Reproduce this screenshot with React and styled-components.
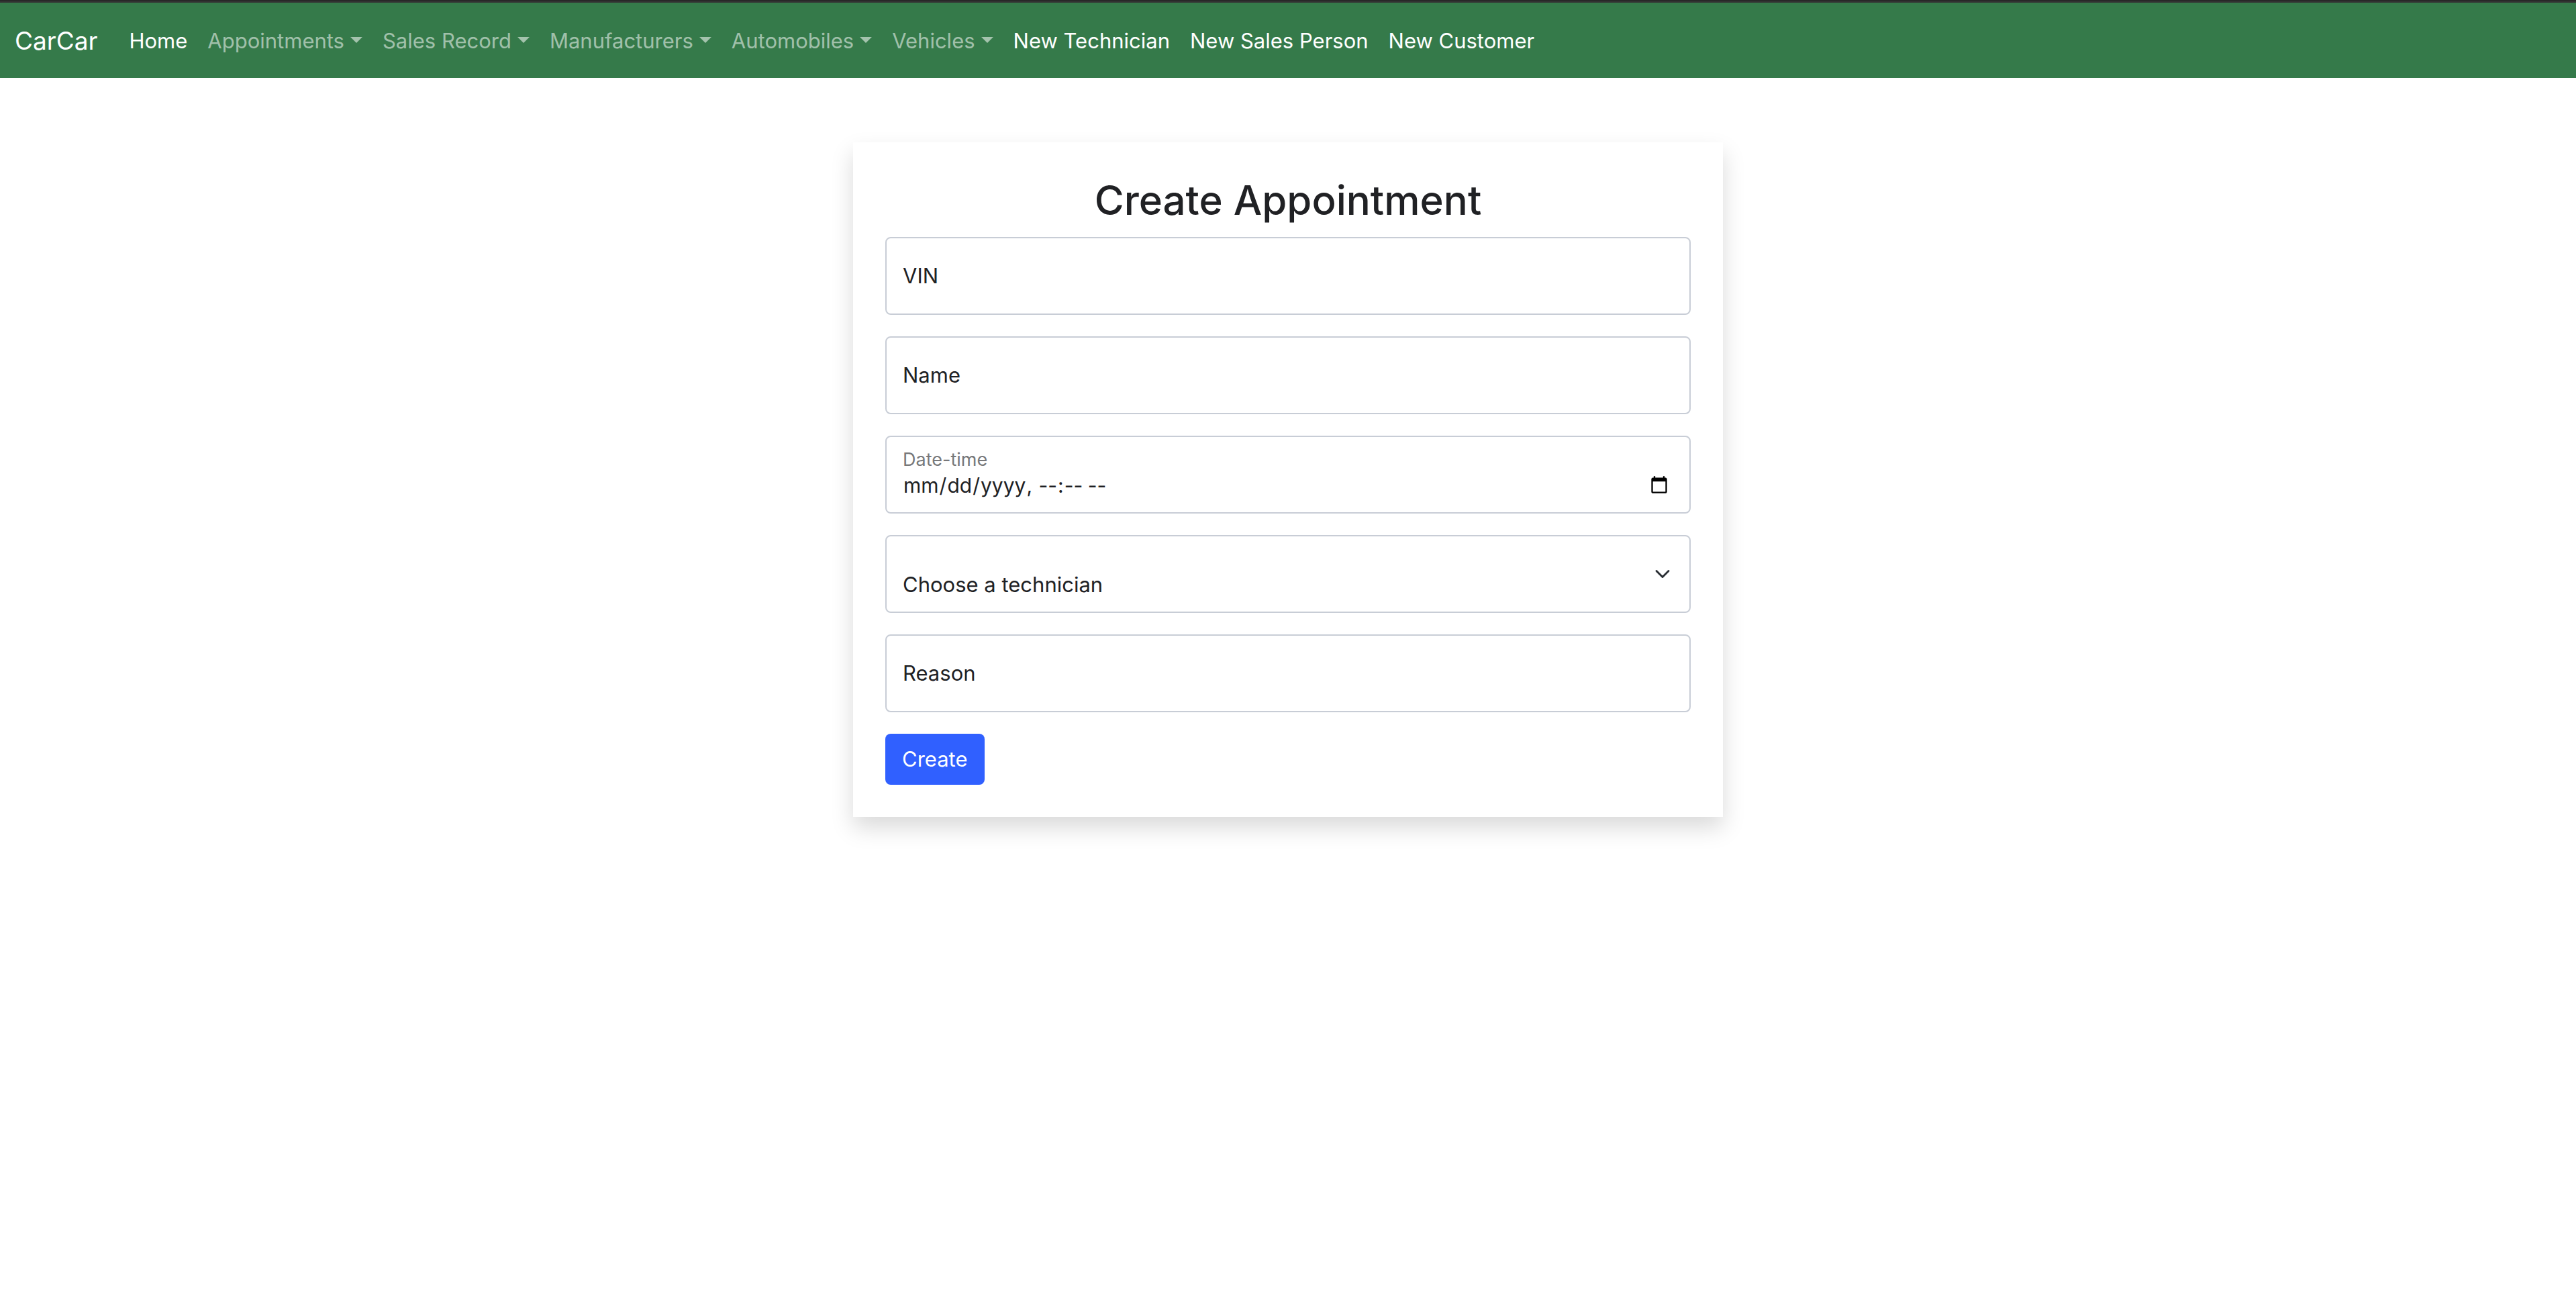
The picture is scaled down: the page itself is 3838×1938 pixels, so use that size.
import React from "react";
import styled, { createGlobalStyle, css } from "styled-components";

const GlobalStyle = createGlobalStyle`
  *, *::before, *::after { box-sizing: border-box; }
  body {
    margin: 0;
    background: #fff;
    color: #202124;
    font-family: Inter, "Liberation Sans", sans-serif;
    font-size: 31px;
    line-height: 48px;
  }
`;

const Navbar = styled.nav`
  display: flex;
  align-items: center;
  height: 116px;
  padding: 4px 22px 0;
  border-top: 2px solid #282828;
  box-shadow: inset 0 2px #343434;
  background: #357a4a;
`;

const Brand = styled.a`
  margin-right: 32px;
  color: #fff;
  font-size: 37px;
  text-decoration: none;
`;

const NavList = styled.ul`
  display: flex;
  margin: 0;
  padding: 0;
  list-style: none;
`;

const NavLink = styled.a`
  display: flex;
  align-items: center;
  padding: 16px 15px;
  color: ${(p) => (p.$menu ? "rgba(255, 255, 255, 0.55)" : "#fff")};
  text-decoration: none;
  ${(p) =>
    p.$menu &&
    css`
      &::after {
        content: "";
        margin: 0 0 4px 9px;
        border-top: 9px solid;
        border-left: 9px solid transparent;
        border-right: 9px solid transparent;
      }
    `}
`;

const Page = styled.main`
  display: flex;
  justify-content: center;
  padding: 96px 24px;
`;

const Card = styled.section`
  width: 100%;
  max-width: 1296px;
  padding: 48px;
  background: #fff;
  box-shadow: 0 16px 32px rgba(0, 0, 0, 0.15);
`;

const Title = styled.h1`
  margin: 0 0 16px;
  font-size: 60px;
  font-weight: 500;
  line-height: 77px;
  text-align: center;
`;

const Form = styled.form`
  display: flex;
  flex-direction: column;
  align-items: flex-start;
  gap: 32px;
`;

const Field = styled.div`
  display: grid;
  width: 100%;

  > * {
    grid-area: 1 / 1;
  }
`;

const control = css`
  width: 100%;
  height: 116px;
  margin: 0;
  padding: 52px 24px 20px;
  border: 2px solid #c8cdd6;
  border-radius: 8px;
  background: #fff;
  color: inherit;
  font: inherit;
  line-height: 40px;
  appearance: none;
`;

const Input = styled.input`
  ${control}

  &[type="datetime-local"] {
    padding-right: 28px;
    font-size: 30px;
  }

  &::-webkit-datetime-edit,
  &::-webkit-datetime-edit-fields-wrapper {
    padding: 0;
  }
`;

const Select = styled.select`
  ${control}
`;

const Label = styled.label`
  z-index: 1;
  align-self: ${(p) => (p.$raised ? "start" : "center")};
  justify-self: start;
  padding: ${(p) => (p.$raised ? "12px 26px 0" : "0 26px")};
  color: ${(p) => (p.$raised ? "#77787a" : "inherit")};
  font-size: ${(p) => (p.$raised ? "27px" : "31px")};
  pointer-events: none;
`;

const Chevron = styled.svg`
  z-index: 1;
  align-self: center;
  justify-self: end;
  width: 24px;
  height: 24px;
  margin-right: 30px;
  pointer-events: none;
`;

const SubmitButton = styled.button`
  height: 76px;
  padding: 0 25px;
  border: 0;
  border-radius: 8px;
  background: #3060ff;
  color: #fff;
  font: inherit;
`;

const links = [
  { text: "Home" },
  { text: "Appointments", menu: true },
  { text: "Sales Record", menu: true },
  { text: "Manufacturers", menu: true },
  { text: "Automobiles", menu: true },
  { text: "Vehicles", menu: true },
  { text: "New Technician" },
  { text: "New Sales Person" },
  { text: "New Customer" },
];

function TextField({ id, label }) {
  return (
    <Field>
      <Input id={id} name={id} type="text" />
      <Label htmlFor={id}>{label}</Label>
    </Field>
  );
}

export default function App() {
  return (
    <>
      <GlobalStyle />
      <Navbar>
        <Brand href="#">CarCar</Brand>
        <NavList>
          {links.map(({ text, menu }) => (
            <li key={text}>
              <NavLink href="#" $menu={menu}>
                {text}
              </NavLink>
            </li>
          ))}
        </NavList>
      </Navbar>
      <Page>
        <Card>
          <Title>Create Appointment</Title>
          <Form>
            <TextField id="vin" label="VIN" />
            <TextField id="name" label="Name" />
            <Field>
              <Input id="date" name="date" type="datetime-local" />
              <Label htmlFor="date" $raised>
                Date-time
              </Label>
            </Field>
            <Field>
              <Select id="technician" name="technician" aria-label="Technician">
                <option>Choose a technician</option>
              </Select>
              <Chevron viewBox="0 0 16 16" aria-hidden="true">
                <path
                  d="M2 5l6 6 6-6"
                  fill="none"
                  stroke="#2b3035"
                  strokeWidth="2"
                  strokeLinecap="round"
                  strokeLinejoin="round"
                />
              </Chevron>
            </Field>
            <TextField id="reason" label="Reason" />
            <SubmitButton type="submit">Create</SubmitButton>
          </Form>
        </Card>
      </Page>
    </>
  );
}
